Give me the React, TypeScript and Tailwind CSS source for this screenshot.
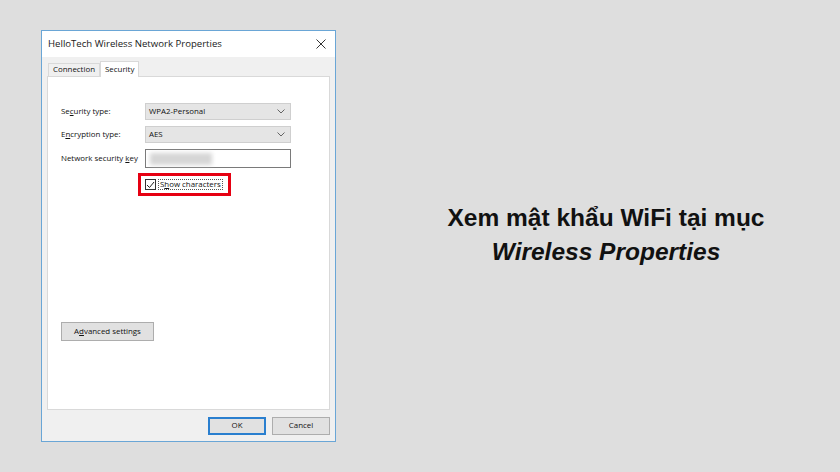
import React from "react";

function Chevron() {
  return (
    <svg width="8" height="5" viewBox="0 0 8 5" className="text-[#555]">
      <path d="M0.5 0.5 L4 4 L7.5 0.5" fill="none" stroke="currentColor" strokeWidth="0.9" />
    </svg>
  );
}

function Select({ value }: { value: string }) {
  return (
    <div className="flex h-[17px] w-[146px] items-center justify-between border border-[#cfcfcf] bg-[#e5e5e5] pl-[3px] pr-[5px]">
      <span>{value}</span>
      <Chevron />
    </div>
  );
}

export default function App() {
  return (
    <div
      className="flex h-[472px] w-[840px] items-start bg-[#dedede] text-[#111]"
      style={{ fontFamily: '"Open Sans", "Noto Sans", sans-serif' }}
    >
      <div className="ml-[41px] mt-[30px] flex h-[412px] w-[295px] flex-col border border-[#6aa6d6] bg-[#f0f0f0] text-[7.9px] leading-none">
        {/* title bar */}
        <div className="flex h-[26px] items-center justify-between bg-white pl-[6px] pr-[9px]">
          <span className="text-[9.6px] text-[#1a1a1a]">HelloTech Wireless Network Properties</span>
          <svg width="10" height="10" viewBox="0 0 10 10">
            <path d="M0.5 0.5 L9.5 9.5 M9.5 0.5 L0.5 9.5" stroke="#333" strokeWidth="1" />
          </svg>
        </div>
        {/* body */}
        <div className="flex flex-1 flex-col px-[5px] pt-[4px]">
          <div className="flex h-[15px] items-end pl-[1px]">
            <div className="flex h-[13px] items-center border border-b-0 border-[#d9d9d9] bg-[#f0f0f0] px-[4px]">Connection</div>
            <div className="relative -mb-px flex h-[16px] items-center border border-b-0 border-[#d9d9d9] bg-white px-[4px]">Security</div>
          </div>
          <div className="flex h-[334px] flex-col border border-[#d9d9d9] bg-white pl-[13px] pt-[26px]">
            <div className="flex items-center">
              <span className="w-[84px]">Se<u>c</u>urity type:</span>
              <Select value="WPA2-Personal" />
            </div>
            <div className="mt-[6px] flex items-center">
              <span className="w-[84px]">E<u>n</u>cryption type:</span>
              <Select value="AES" />
            </div>
            <div className="mt-[6px] flex items-center">
              <span className="w-[84px]">Network security <u>k</u>ey</span>
              <div className="flex h-[19px] w-[146px] items-center border border-[#7a7a7a] bg-white pl-[4px]">
                <div className="h-[12px] w-[62px] bg-[#d6d6d6] blur-[2px]" />
              </div>
            </div>
            <div className="ml-[77px] mt-[5px] flex h-[23px] w-[93px] items-center border-[3px] border-[#e60012] pl-[4px]">
              <div className="flex h-[11px] w-[11px] items-center justify-center border border-[#333] bg-white">
                <svg width="9" height="8" viewBox="0 0 9 8">
                  <path d="M1 4 L3.5 6.5 L8 1" fill="none" stroke="#222" strokeWidth="1" />
                </svg>
              </div>
              <span className="ml-[2px] border border-dotted border-[#555] px-[1px] py-[1px]">
                S<u>h</u>ow characters
              </span>
            </div>
            <div className="mt-[126px] flex h-[19px] w-[93px] items-center justify-center border border-[#adadad] bg-[#e1e1e1]">
              A<u>d</u>vanced settings
            </div>
          </div>
          <div className="mt-[7px] flex justify-end gap-[6px] pr-[0px]">
            <div className="flex h-[18px] w-[58px] items-center justify-center border-2 border-[#2a7fcf] bg-[#e1e1e1]">OK</div>
            <div className="flex h-[18px] w-[58px] items-center justify-center border border-[#adadad] bg-[#e1e1e1]">Cancel</div>
          </div>
        </div>
      </div>
      <div
        className="ml-[36px] flex h-full flex-1 flex-col items-center justify-center pb-[2px] text-[24.5px] font-bold leading-[34px] text-[#111]"
        style={{ fontFamily: '"Liberation Sans", Arial, sans-serif' }}
      >
        <div>Xem mật khẩu WiFi tại mục</div>
        <div className="italic">Wireless Properties</div>
      </div>
    </div>
  );
}
